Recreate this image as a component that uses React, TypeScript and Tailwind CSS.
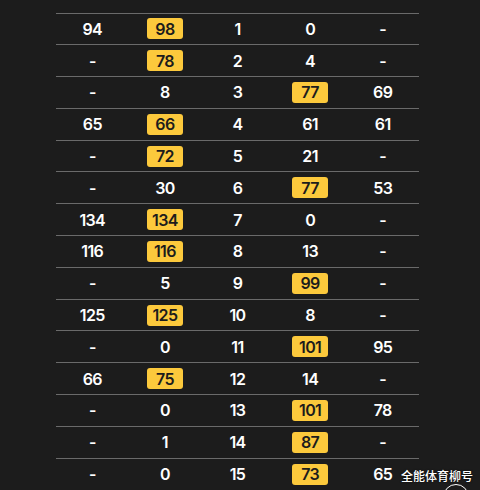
const rows: [string, string, string, string, string, number][] = [
  ["94", "98", "1", "0", "-", 1],
  ["-", "78", "2", "4", "-", 1],
  ["-", "8", "3", "77", "69", 3],
  ["65", "66", "4", "61", "61", 1],
  ["-", "72", "5", "21", "-", 1],
  ["-", "30", "6", "77", "53", 3],
  ["134", "134", "7", "0", "-", 1],
  ["116", "116", "8", "13", "-", 1],
  ["-", "5", "9", "99", "-", 3],
  ["125", "125", "10", "8", "-", 1],
  ["-", "0", "11", "101", "95", 3],
  ["66", "75", "12", "14", "-", 1],
  ["-", "0", "13", "101", "78", 3],
  ["-", "1", "14", "87", "-", 3],
  ["-", "0", "15", "73", "65", 3],
];

export default function App() {
  return (
    <div
      className="relative w-[480px] h-[490px] overflow-hidden bg-[#1c1c1c] pt-[12.5px]"
      style={{ fontFamily: "Inter, 'Noto Sans', sans-serif" }}
    >
      <div className="ml-[56px] w-[363px]">
        {rows.map((r, i) => (
          <div key={i} className="grid grid-cols-5 h-[31.8px] border-t border-[#6a6a6a]">
            {r.slice(0, 5).map((v, j) => (
              <div key={j} className="flex items-center justify-center">
                {j === r[5] ? (
                  <span className="flex items-center justify-center w-[36px] h-[21px] rounded-[3px] bg-[#fcc93c] text-[#1c1c1c] text-[16px] font-semibold tracking-[-0.04em]">
                    {v}
                  </span>
                ) : (
                  <span className="text-white text-[16px] font-semibold tracking-[-0.04em]">{v}</span>
                )}
              </div>
            ))}
          </div>
        ))}
      </div>
      <div
        className="absolute left-[401px] top-[467px] text-white text-[12px] font-medium [text-shadow:0_0_2px_rgba(0,0,0,0.8)]"
        style={{ fontFamily: "'Noto Sans CJK SC', sans-serif" }}
      >
        全能体育柳号
      </div>
      <div className="absolute left-[443px] top-[484px] w-[26px] h-[26px] rounded-full border-[1.5px] border-white" />
    </div>
  );
}
